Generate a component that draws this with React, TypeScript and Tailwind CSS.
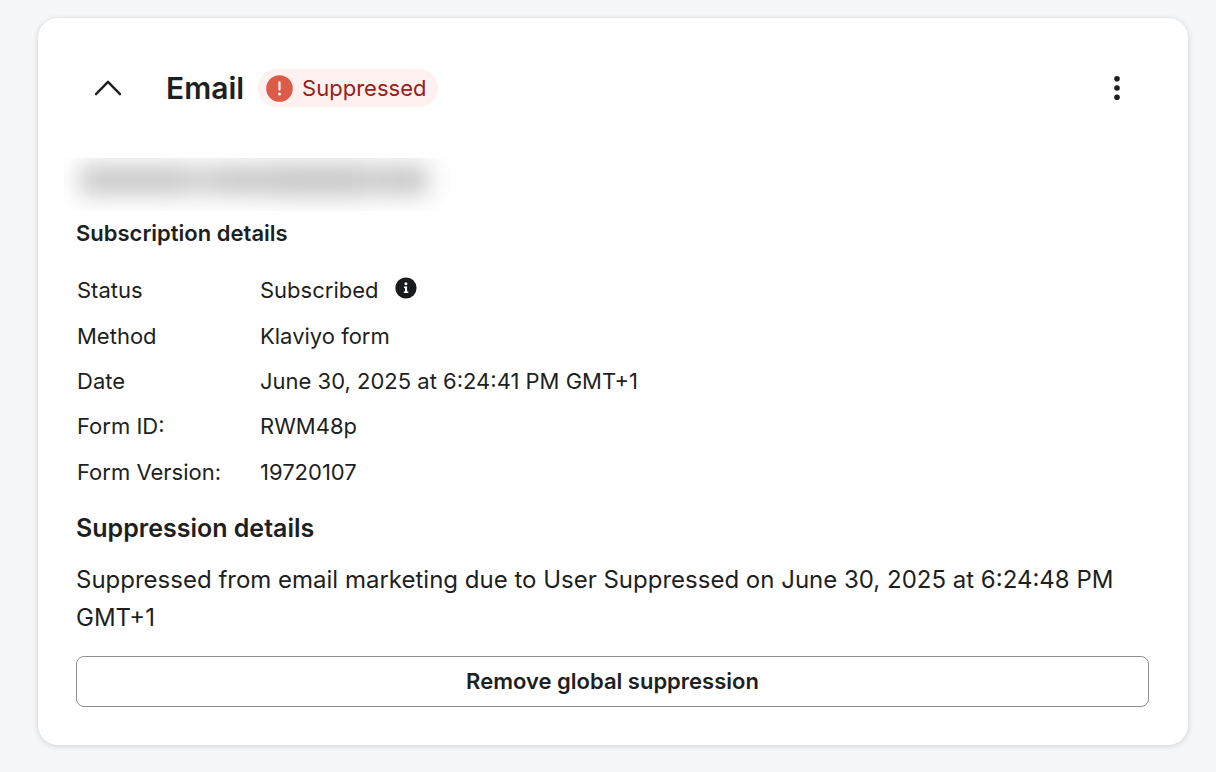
type Detail = {
  label: string;
  value: string;
  hasInfo?: boolean;
};

const SUBSCRIPTION_DETAILS: Detail[] = [
  { label: "Status", value: "Subscribed", hasInfo: true },
  { label: "Method", value: "Klaviyo form" },
  { label: "Date", value: "June 30, 2025 at 6:24:41 PM GMT+1" },
  { label: "Form ID:", value: "RWM48p" },
  { label: "Form Version:", value: "19720107" },
];

function ChevronIcon() {
  return (
    <svg width="28" height="18" viewBox="0 0 28 18" fill="none" aria-hidden="true">
      <path
        d="M2 15.2 L14 2.8 L26 15.2"
        stroke="#1d1f20"
        strokeWidth="2.4"
        strokeLinecap="round"
        strokeLinejoin="round"
      />
    </svg>
  );
}

function AlertIcon() {
  return (
    <svg width="27" height="27" viewBox="0 0 27 27" aria-hidden="true">
      <circle cx="13.5" cy="13.5" r="13.3" fill="#dc5c4b" />
      <path d="M13.5 7.4 V14.6" stroke="#fff3f1" strokeWidth="2.2" strokeLinecap="round" />
      <circle cx="13.5" cy="18.9" r="1.5" fill="#fff3f1" />
    </svg>
  );
}

function InfoIcon() {
  return (
    <svg width="22" height="22" viewBox="0 0 22 22" aria-hidden="true">
      <circle cx="11" cy="11" r="10.6" fill="#1a1b1c" />
      <circle cx="10.9" cy="6.7" r="1.5" fill="#fff" />
      <path d="M9 9.4 H12.1 V14.4 H13.3 V16 H8.8 V14.4 H10 V11 H9 Z" fill="#fff" />
    </svg>
  );
}

function MoreIcon() {
  return (
    <svg width="8" height="26" viewBox="0 0 8 26" fill="#1d1f20" aria-hidden="true">
      <circle cx="4" cy="3.7" r="2.8" />
      <circle cx="4" cy="13" r="2.8" />
      <circle cx="4" cy="22.3" r="2.8" />
    </svg>
  );
}

/** The contact's address, hidden behind a soft grey smudge. */
function RedactedAddress() {
  return (
    <div className="-ml-3 flex h-[53px] w-[388px] items-start overflow-hidden pt-2 pr-6 pl-4">
      <div className="flex h-7 w-full items-center blur-[12px]">
        <div className="h-7 w-[30%] bg-[#c4c4c4]" />
        <div className="h-6 w-[10%] bg-[#c8c8c8]" />
        <div className="h-7 w-[16%] bg-[#c4c4c4]" />
        <div className="h-8 w-[26%] bg-[#c6c6c6]" />
        <div className="h-7 w-[6%] bg-[#cacaca]" />
        <div className="h-7 w-[12%] bg-[#c2c2c2]" />
      </div>
    </div>
  );
}

function SuppressedBadge() {
  return (
    <span className="flex h-[38px] items-center gap-[9px] rounded-full bg-[#fff1ef] pr-3 pl-2 text-[22px] text-[#98201b]">
      <AlertIcon />
      Suppressed
    </span>
  );
}

function SubscriptionTable() {
  return (
    <table className="mt-[19px] h-[227px] text-[22px]">
      <tbody>
        {SUBSCRIPTION_DETAILS.map(({ label, value, hasInfo }) => (
          <tr key={label}>
            <th scope="row" className="w-[184px] p-0 pl-px text-left font-normal">
              {label}
            </th>
            <td className="p-0">
              <span className="flex items-center gap-4">
                {value}
                {hasInfo ? (
                  <button type="button" aria-label="About this status" className="pb-1.5">
                    <InfoIcon />
                  </button>
                ) : null}
              </span>
            </td>
          </tr>
        ))}
      </tbody>
    </table>
  );
}

export default function App() {
  return (
    <main className="min-h-screen bg-[#f6f7f9] pt-[18px] pr-7 pb-[27px] pl-[38px] font-['Inter',sans-serif] text-[#1d1f20]">
      <section className="rounded-[20px] bg-white pt-[51px] pr-[39px] pb-[38px] pl-[38px] shadow-[0_1px_6px_rgba(0,0,0,0.16)]">
        <header className="flex items-center pr-7 pl-[18px]">
          <button type="button" aria-label="Collapse email details" aria-expanded="true">
            <ChevronIcon />
          </button>
          <h2 className="ml-11 text-[30px] leading-9 font-semibold">Email</h2>
          <div className="ml-[14px]">
            <SuppressedBadge />
          </div>
          <button type="button" aria-label="More actions" className="ml-auto">
            <MoreIcon />
          </button>
        </header>

        <div className="mt-[51px]">
          <RedactedAddress />
        </div>

        <h3 className="mt-[6px] text-[22px] leading-8 font-semibold">Subscription details</h3>
        <SubscriptionTable />

        <h3 className="mt-[17px] text-[25px] leading-8 font-semibold">Suppression details</h3>
        <p className="mt-[17px] text-[24px] leading-[38px]">
          Suppressed from email marketing due to User Suppressed on June 30, 2025 at 6:24:48 PM
          GMT+1
        </p>

        <button
          type="button"
          className="mt-[19px] h-[51px] w-full rounded-lg border border-[#8f9193] text-[22px] font-semibold"
        >
          Remove global suppression
        </button>
      </section>
    </main>
  );
}
